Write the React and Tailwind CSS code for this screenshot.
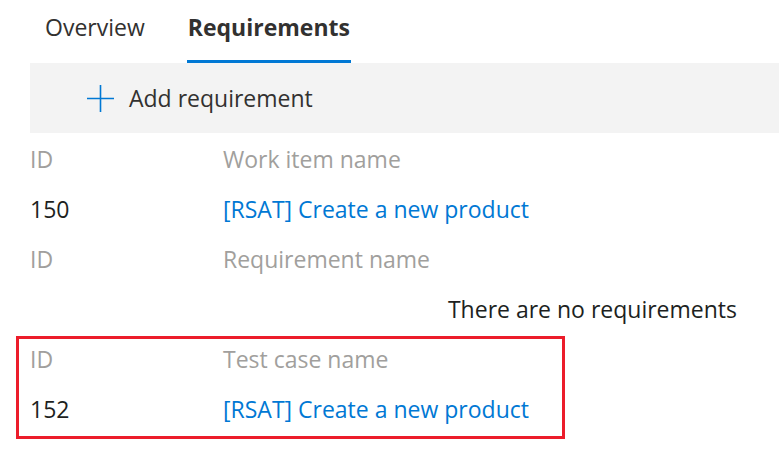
import React from 'react'

const font = { fontFamily: '"Open Sans", "Noto Sans", sans-serif' }

const Row = ({ id, name, head }) => (
  <div className="flex h-[50px] items-center pt-[2px]">
    <div className={`w-[193px] shrink-0 ${head ? 'text-[#a19f9d]' : 'text-[#201f1e]'}`}>{id}</div>
    <div className={head ? 'text-[#a19f9d]' : 'text-[#0078d4]'}>{name}</div>
  </div>
)

export default function App() {
  return (
    <div className="h-[453px] w-[779px] overflow-hidden bg-white text-[23px] leading-[30px] text-[#323130]" style={font}>
      <div className="flex h-[63px] items-end gap-[42px] pl-[45px]">
        <div className="flex h-[63px] items-center pb-[10px]">Overview</div>
        <div className="flex h-[63px] flex-col justify-between">
          <div className="flex flex-1 items-center px-[1px] pb-[7px] font-bold">Requirements</div>
          <div className="h-[3px] bg-[#0078d4]" />
        </div>
      </div>

      <div className="ml-[30px]">
        <div className="flex h-[70px] items-center bg-[#f3f3f3] pl-[56px]">
          <svg width="29" height="29" viewBox="0 0 29 29" className="mr-[14px]">
            <path d="M14.5 1v27M1 14.5h27" stroke="#0078d4" strokeWidth="1.6" fill="none" />
          </svg>
          <span>Add requirement</span>
        </div>

        <Row head id="ID" name="Work item name" />
        <Row id="150" name="[RSAT] Create a new product" />
        <Row head id="ID" name="Requirement name" />
        <div className="flex h-[50px] items-center justify-end pt-[2px] pr-[42px] text-[#201f1e]">There are no requirements</div>

        <div className="relative">
          <Row head id="ID" name="Test case name" />
          <Row id="152" name="[RSAT] Create a new product" />
          <div className="pointer-events-none absolute top-[3px] bottom-[-6px] left-[-14px] w-[549px] border-[3px] border-[#ec1c2a]" />
        </div>
      </div>
    </div>
  )
}
